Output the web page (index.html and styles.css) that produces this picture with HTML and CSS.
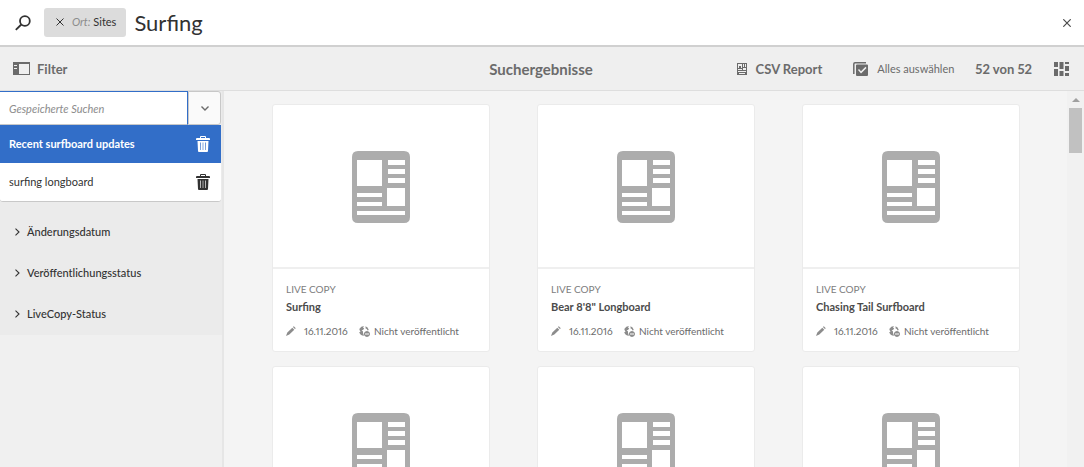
FILE: index.html
```html
<!DOCTYPE html>
<html lang="de">
<head>
<meta charset="utf-8">
<meta name="viewport" content="width=device-width, initial-scale=1">
<title>Suchergebnisse</title>
<link rel="stylesheet" href="styles.css">
</head>
<body>
<svg class="sprite" aria-hidden="true">
  <symbol id="page" viewBox="0 0 58 72">
    <path fill-rule="evenodd" d="M6 0H52Q58 0 58 6V66Q58 72 52 72H6Q0 72 0 66V6Q0 0 6 0ZM5 9V35H30V9ZM36 9V14H53V9ZM36 18V23H53V18ZM36 27V32H53V27ZM35 37V55H53V37ZM5 42V46H30V42ZM5 51V55H30V51ZM5 60V64H53V60Z"/>
  </symbol>
  <symbol id="trash" viewBox="0 0 14 16">
    <path fill-rule="evenodd" d="M4 2V1Q4 0 5 0H9Q10 0 10 1V2H13Q14 2 14 3V4H0V3Q0 2 1 2ZM5 1V2H9V1ZM1.500 5H12.500L12 15Q12 16 11 16H3Q2 16 2 15ZM4 6.500L4.400 14H5L4.700 6.500ZM6.700 6.500V14H7.300V6.500ZM9.300 6.500L9 14H9.600L10 6.500Z"/>
  </symbol>
  <symbol id="pencil" viewBox="0 0 10 10">
    <path d="M7.800 .2L9.800 2.200 8.900 3.100 6.900 1.100ZM6.300 1.700L8.300 3.700 3.300 8.500 0 10 1.300 6.600Z"/>
  </symbol>
  <symbol id="globe" viewBox="0 0 11 11">
    <path d="M.3 3Q2 0 5 0L4 1.500 5.200 2.500 4 4 2.600 4.200 4 5.500 4 7 5 9.800Q1 9.500 .2 6L1.500 6 .8 4.500ZM6.500 .2Q9 1 9.800 4L8.500 4.500 7.800 3 6.600 2.500Z"/>
    <path fill-rule="evenodd" d="M8 5A3 3 0 1 1 7.900 5ZM6 7.500V8.500H10V7.500Z"/>
  </symbol>
  <symbol id="chevron" viewBox="0 0 5 8">
    <path fill="none" stroke="currentColor" stroke-width="1.100" d="M.5 .7L4 4 .5 7.300"/>
  </symbol>
</svg>

<header class="search">
  <svg class="search-icon" width="16" height="16" viewBox="0 0 16 16" aria-hidden="true"><path fill="none" stroke="currentColor" stroke-width="1.800" d="M14.800 6A4.900 4.900 0 1 1 5 6A4.900 4.900 0 1 1 14.800 6ZM6.300 9.500L.8 14.900"/></svg>
  <button class="tag" type="button"><svg width="8" height="8" viewBox="0 0 8 8" aria-hidden="true"><path stroke="currentColor" d="M.5 .5L7.500 7.500M7.500 .5L.5 7.500"/></svg><span><em>Ort:</em> Sites</span></button>
  <input class="query" type="text" value="Surfing" aria-label="Suche">
  <button class="close" type="button" aria-label="Schließen"><svg width="8" height="8" viewBox="0 0 8 8" aria-hidden="true"><path stroke="currentColor" stroke-width="1.200" d="M.3 .3L7.700 7.700M7.700 .3L.3 7.700"/></svg></button>
</header>

<div class="toolbar">
  <button class="tool filter" type="button"><svg width="17" height="13" viewBox="0 0 17 13" aria-hidden="true"><path fill-rule="evenodd" d="M0 0H17V13H0ZM6 2V12H16V2ZM1 3V4H4V3ZM1 6V7H4V6Z"/></svg>Filter</button>
  <h1 class="title">Suchergebnisse</h1>
  <div class="actions">
    <button class="tool report" type="button"><svg width="10" height="12" viewBox="0 0 10 12" aria-hidden="true"><path fill-rule="evenodd" d="M0 0H10V12H0ZM1 1V5H2V3H4V5H5V1ZM6 1V4H7V1ZM8 1V4H9V1ZM1 6V7H5V6ZM6 5V7H9V5ZM1 8V9H9V8ZM2 10V11H8V10Z"/></svg>CSV Report</button>
    <button class="tool select-all" type="button"><svg width="15" height="14" viewBox="0 0 15 14" aria-hidden="true"><path fill="none" stroke="currentColor" stroke-width="1.500" d="M13 .8H2Q.8 .8 .8 2V12"/><path fill-rule="evenodd" d="M4 2.500H14Q15 2.500 15 3.500V13Q15 14 14 14H4Q3 14 3 13V3.500Q3 2.500 4 2.500ZM5 8L8 11.500 13.500 6 12.500 4.800 8 9.200 6 7Z"/></svg>Alles auswählen</button>
    <span class="count">52 von 52</span>
    <button class="tool view" type="button" aria-label="Ansicht wechseln"><svg width="15" height="14" viewBox="0 0 15 14" aria-hidden="true"><path d="M0 0H4V5H0ZM0 7H4V14H0ZM5.500 0H9.500V7H5.500ZM5.500 9H9.500V14H5.500ZM11 0H15V2H11ZM11 4H15V9H11ZM11 11H15V14H11Z"/></svg></button>
  </div>
</div>

<div class="body">
  <aside class="sidebar">
    <div class="panel">
      <div class="saved">
        <div class="combo">
          <input type="text" placeholder="Gespeicherte Suchen" aria-label="Gespeicherte Suchen">
          <button type="button" aria-label="Liste öffnen"><svg width="8" height="5" viewBox="0 0 8 5" aria-hidden="true"><path fill="none" stroke="currentColor" stroke-width="1.400" d="M.5 .5L4 4 7.500 .5"/></svg></button>
        </div>
        <ul class="list">
          <li class="active"><button class="name" type="button">Recent surfboard updates</button><button type="button" aria-label="Löschen"><svg width="14" height="16" aria-hidden="true"><use href="#trash"/></svg></button></li>
          <li><button class="name" type="button">surfing longboard</button><button type="button" aria-label="Löschen"><svg width="14" height="16" aria-hidden="true"><use href="#trash"/></svg></button></li>
        </ul>
      </div>
      <div class="facets">
        <button type="button"><svg width="5" height="8" aria-hidden="true"><use href="#chevron"/></svg>Änderungsdatum</button>
        <button type="button"><svg width="5" height="8" aria-hidden="true"><use href="#chevron"/></svg>Veröffentlichungsstatus</button>
        <button type="button"><svg width="5" height="8" aria-hidden="true"><use href="#chevron"/></svg>LiveCopy-Status</button>
      </div>
    </div>
  </aside>

  <main class="results">
    <article class="card">
      <div class="thumb"><svg width="58" height="72" aria-hidden="true"><use href="#page"/></svg></div>
      <div class="info">
        <p class="kind">LIVE COPY</p>
        <h2>Surfing</h2>
        <p class="meta"><svg width="10" height="10" aria-hidden="true"><use href="#pencil"/></svg><span class="date">16.11.2016</span><svg width="11" height="11" aria-hidden="true"><use href="#globe"/></svg><span>Nicht veröffentlicht</span></p>
      </div>
    </article>
    <article class="card">
      <div class="thumb"><svg width="58" height="72" aria-hidden="true"><use href="#page"/></svg></div>
      <div class="info">
        <p class="kind">LIVE COPY</p>
        <h2>Bear 8'8" Longboard</h2>
        <p class="meta"><svg width="10" height="10" aria-hidden="true"><use href="#pencil"/></svg><span class="date">16.11.2016</span><svg width="11" height="11" aria-hidden="true"><use href="#globe"/></svg><span>Nicht veröffentlicht</span></p>
      </div>
    </article>
    <article class="card">
      <div class="thumb"><svg width="58" height="72" aria-hidden="true"><use href="#page"/></svg></div>
      <div class="info">
        <p class="kind">LIVE COPY</p>
        <h2>Chasing Tail Surfboard</h2>
        <p class="meta"><svg width="10" height="10" aria-hidden="true"><use href="#pencil"/></svg><span class="date">16.11.2016</span><svg width="11" height="11" aria-hidden="true"><use href="#globe"/></svg><span>Nicht veröffentlicht</span></p>
      </div>
    </article>
    <article class="card"><div class="thumb"><svg width="58" height="72" aria-hidden="true"><use href="#page"/></svg></div></article>
    <article class="card"><div class="thumb"><svg width="58" height="72" aria-hidden="true"><use href="#page"/></svg></div></article>
    <article class="card"><div class="thumb"><svg width="58" height="72" aria-hidden="true"><use href="#page"/></svg></div></article>
  </main>

  <div class="scrollbar" aria-hidden="true">
    <svg width="8" height="4" viewBox="0 0 8 4"><path d="M4 0L8 4H0Z"/></svg>
    <div class="grip"></div>
  </div>
</div>
</body>
</html>
```
FILE: styles.css
```css
* { box-sizing: border-box; }

body {
  margin: 0;
  height: 100vh;
  display: flex;
  flex-direction: column;
  overflow: hidden;
  background: #f4f4f4;
  color: #323232;
  font: 11px/16px Lato, "Liberation Sans", sans-serif;
  font-variant-numeric: proportional-nums;
}

button, input {
  margin: 0;
  padding: 0;
  border: 0;
  background: none;
  color: inherit;
  font: inherit;
}

input { min-width: 0; outline: 0; }

svg { display: block; flex: none; fill: currentColor; }

.sprite { position: absolute; width: 0; height: 0; }

/* Search bar */
.search {
  flex: none;
  display: flex;
  align-items: center;
  padding: 8px 13px 8px 15px;
  background: #fff;
  border-bottom: 2px solid #d0d0d0;
}

.search-icon { margin-right: 13px; }

.tag {
  display: flex;
  align-items: center;
  gap: 8px;
  height: 29px;
  padding: 0 10px 2px 12px;
  margin-right: 8px;
  border-radius: 3px;
  background: #dcdcdc;
}

.tag em { color: #8c8c8c; }

.query {
  flex: 1;
  height: 29px;
  font-size: 22px;
}

.close { color: #4b4b4b; }

/* Toolbar */
.toolbar {
  flex: none;
  display: grid;
  grid-template-columns: 1fr auto 1fr;
  align-items: center;
  height: 44px;
  padding: 0 15px 0 13px;
  background: #efefef;
  border-bottom: 1px solid #dedede;
  color: #6b6b6b;
}

.tool { display: flex; align-items: center; }

.filter, .report, .count { font-size: 13px; font-weight: 700; }

.filter { gap: 7px; }

.title { margin: 0; font-size: 15px; font-weight: 700; }

.actions {
  display: flex;
  align-items: center;
  justify-content: flex-end;
}

.report { gap: 9px; margin-right: 31px; }
.select-all { gap: 9px; margin-right: 21px; }
.count { margin-right: 22px; }

/* Body */
.body { flex: 1; display: flex; min-height: 0; }

.sidebar {
  flex: none;
  width: 224px;
  background: #f0f0f0;
  border-right: 2px solid #e6e6e6;
}

.panel { background: #ebebeb; }

.saved { margin-right: 1px; }

.combo { display: flex; }

.combo input {
  flex: 1;
  height: 34px;
  padding-left: 9px;
  background: #fff;
  border-style: solid;
  border-width: 1px 1px 1px 0;
  border-color: #326ec8 #326ec8 #c8c8c8;
  font-style: italic;
}

.combo input::placeholder { color: #8c8c8c; opacity: 1; }

.combo button {
  display: grid;
  place-items: center;
  width: 33px;
  background: #fafafa;
  border: 1px solid #c8c8c8;
  border-radius: 0 3px 3px 0;
  color: #6b6b6b;
}

.list {
  margin: 0;
  padding: 0;
  list-style: none;
  background: #fff;
  border-bottom: 1px solid #c8c8c8;
  border-radius: 0 0 3px 3px;
}

.list li {
  display: flex;
  align-items: center;
  height: 38px;
  padding: 0 11px 0 9px;
}

.list .active { background: #326ec8; color: #fff; font-weight: 700; }

.name { flex: 1; text-align: left; }

.facets { padding: 9px 0 1px; }

.facets button {
  display: flex;
  align-items: center;
  gap: 7px;
  width: 100%;
  height: 41px;
  padding-left: 15px;
  font-weight: 500;
}

.results {
  flex: 1;
  display: grid;
  grid-template-columns: repeat(3, 1fr);
  gap: 14px 47px;
  align-content: start;
  padding: 13px 47px 13px 48px;
  overflow: hidden;
}

.card {
  min-height: 248px;
  background: #fff;
  border: 1px solid #ebebeb;
  border-radius: 3px;
}

.thumb {
  display: grid;
  place-items: center;
  height: 164px;
  padding-top: 2px;
  border-bottom: 2px solid #efefef;
  color: #acacac;
}

.info { padding: 12px 13px; }

.info h2, .info p { margin: 0; }

.kind { font-size: 10px; color: #7d7d7d; }

.info h2 { font-size: 11px; line-height: 20px; color: #4b4b4b; }

.meta {
  display: flex;
  align-items: center;
  padding-top: 6px;
  font-size: 10px;
  color: #6b6b6b;
}

.meta svg { color: #8c8c8c; }

.meta span { margin-left: 4px; }

.meta .date { width: 51px; margin: 0 4px 0 8px; }

.scrollbar {
  flex: none;
  display: flex;
  flex-direction: column;
  align-items: center;
  gap: 6px;
  width: 17px;
  padding-top: 7px;
  background: #f1f1f1;
  color: #a0a0a0;
}

.grip { width: 13px; height: 45px; background: #c1c1c1; }
```
